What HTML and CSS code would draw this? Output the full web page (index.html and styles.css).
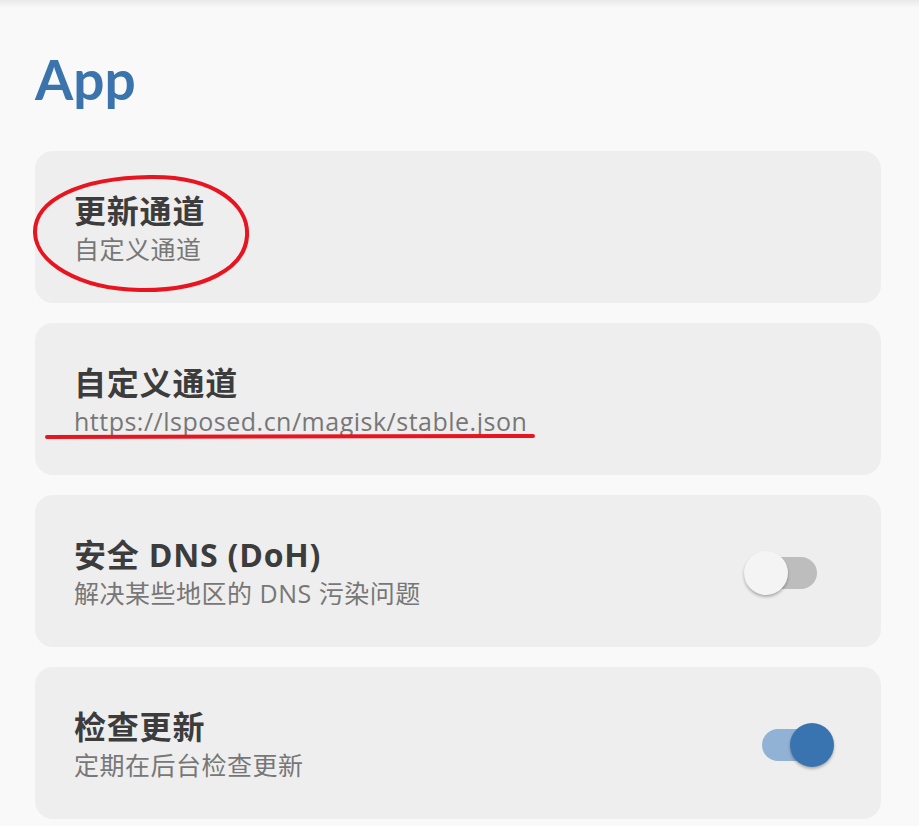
FILE: index.html
```html
<!DOCTYPE html>
<html lang="zh-CN">
<head>
<meta charset="utf-8">
<title>App</title>
<link rel="stylesheet" href="styles.css">
</head>
<body>
<div class="page">
  <div class="top-shadow"></div>
  <h1 class="section-title">App</h1>
  <div class="cards">
    <div class="card">
      <div class="texts">
        <div class="item-title">更新通道</div>
        <div class="item-sub">自定义通道</div>
      </div>
    </div>
    <div class="card">
      <div class="texts">
        <div class="item-title">自定义通道</div>
        <div class="item-sub">https://lsposed.cn/magisk/stable.json</div>
      </div>
    </div>
    <div class="card">
      <div class="texts">
        <div class="item-title">安全 DNS (DoH)</div>
        <div class="item-sub">解决某些地区的 DNS 污染问题</div>
      </div>
      <div class="switch">
        <div class="track"></div>
        <div class="thumb"></div>
      </div>
    </div>
    <div class="card">
      <div class="texts">
        <div class="item-title">检查更新</div>
        <div class="item-sub">定期在后台检查更新</div>
      </div>
      <div class="switch on">
        <div class="track"></div>
        <div class="thumb"></div>
      </div>
    </div>
  </div>
  <svg class="annotations" width="919" height="826" viewBox="0 0 919 826">
    <path d="M150 177 C 215 176, 249 205, 247 236 C 245 268, 205 291, 140 290 C 78 289, 36 262, 35 233 C 34 200, 80 178, 150 177 Z" fill="none" stroke="#e8141f" stroke-width="4"/>
    <line x1="47" y1="437" x2="533" y2="436" stroke="#e8141f" stroke-width="4" stroke-linecap="round"/>
  </svg>
</div>
</body>
</html>
```
FILE: styles.css
```css
html, body {
  margin: 0;
  padding: 0;
  background: #f9f9f9;
}
body {
  font-family: "Open Sans", "Noto Sans CJK SC", sans-serif;
  width: 919px;
  height: 826px;
  overflow: hidden;
}
.page {
  position: relative;
  width: 919px;
  height: 826px;
}
.top-shadow {
  height: 8px;
  background: linear-gradient(to bottom, #e9e9e9, #f9f9f9);
}
.section-title {
  margin: 41px 0 42px 35px;
  height: 60px;
  line-height: 60px;
  font-size: 55px;
  font-weight: 700;
  color: #3b74ad;
  font-family: "Lato", sans-serif;
}
.cards {
  display: flex;
  flex-direction: column;
  gap: 20px;
  padding: 0 38px 0 35px;
}
.card {
  height: 152px;
  box-sizing: border-box;
  background: #eeeeee;
  border-radius: 18px;
  display: flex;
  align-items: center;
  justify-content: space-between;
  padding: 3px 64px 0 39px;
}
.texts {
  display: flex;
  flex-direction: column;
}
.item-title {
  font-size: 32px;
  line-height: 40px;
  font-weight: 700;
  letter-spacing: 0.8px;
  color: #3c3c3c;
  font-family: "Open Sans", "Noto Sans CJK SC", sans-serif;
}
.item-sub {
  font-size: 25px;
  line-height: 36px;
  letter-spacing: 0.5px;
  color: #777777;
  font-family: "Open Sans", "Noto Sans CJK SC", sans-serif;
}
.switch {
  position: relative;
  width: 55px;
  height: 32px;
}
.track {
  width: 55px;
  height: 32px;
  border-radius: 16px;
  background: #bdbdbd;
}
.thumb {
  position: absolute;
  top: -6px;
  left: -18px;
  width: 44px;
  height: 44px;
  border-radius: 50%;
  background: #f4f4f4;
  box-shadow: 0 2px 3px rgba(0, 0, 0, 0.28);
}
.switch.on .track {
  background: #91b2d5;
}
.switch.on .thumb {
  left: 28px;
  background: #3a74b0;
}
.annotations {
  position: absolute;
  left: 0;
  top: 0;
  pointer-events: none;
}
```
